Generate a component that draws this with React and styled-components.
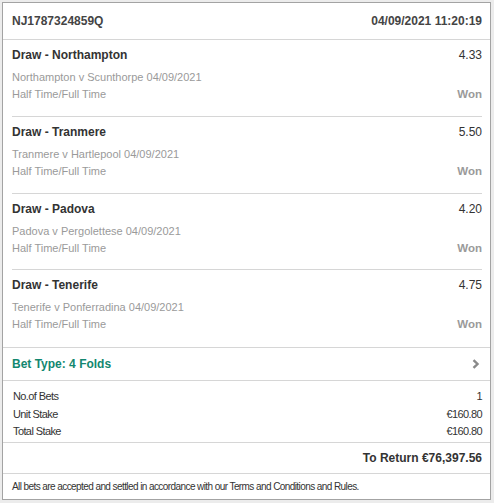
import styled, { createGlobalStyle } from "styled-components";

const GlobalStyle = createGlobalStyle`
  html, body {
    margin: 0;
    padding: 0;
    background: #ececec;
  }
  body {
    padding: 2px 0 0 2px;
    font-family: "Liberation Sans", Arial, sans-serif;
  }
`;

const selections = [
  { title: "Draw - Northampton", odds: "4.33", event: "Northampton v Scunthorpe 04/09/2021" },
  { title: "Draw - Tranmere", odds: "5.50", event: "Tranmere v Hartlepool 04/09/2021" },
  { title: "Draw - Padova", odds: "4.20", event: "Padova v Pergolettese 04/09/2021" },
  { title: "Draw - Tenerife", odds: "4.75", event: "Tenerife v Ponferradina 04/09/2021" },
];

const stakes = [
  { label: "No.of Bets", value: "1" },
  { label: "Unit Stake", value: "€160.80" },
  { label: "Total Stake", value: "€160.80" },
];

export default function App() {
  return (
    <>
      <GlobalStyle />
      <Card>
        <Header>
          <span>NJ1787324859Q</span>
          <span>04/09/2021 11:20:19</span>
        </Header>
        {selections.map((s, i) => (
          <Selection key={s.title} last={i === selections.length - 1}>
            <TitleRow>
              <Title>{s.title}</Title>
              <Odds>{s.odds}</Odds>
            </TitleRow>
            <SubRow first>
              <span>{s.event}</span>
            </SubRow>
            <SubRow>
              <span>Half Time/Full Time</span>
              <Result>Won</Result>
            </SubRow>
          </Selection>
        ))}
        <BetType>
          <span>Bet Type: 4 Folds</span>
          <svg width="8" height="10" viewBox="0 0 8 10">
            <path d="M1.5 1.2 L5.5 5 L1.5 8.8" fill="none" stroke="#8a8a8a" strokeWidth="2.4" />
          </svg>
        </BetType>
        <Stakes>
          {stakes.map((r) => (
            <StakeRow key={r.label}>
              <span>{r.label}</span>
              <span>{r.value}</span>
            </StakeRow>
          ))}
        </Stakes>
        <Return>To Return €76,397.56</Return>
        <Footer>All bets are accepted and settled in accordance with our Terms and Conditions and Rules.</Footer>
      </Card>
    </>
  );
}

const Card = styled.div`
  width: 487px;
  height: 496px;
  background: #fff;
  border: 1px solid #a3a3a3;
  display: flex;
  flex-direction: column;
  color: #333;
  font-size: 12px;
`;

const Header = styled.div`
  height: 36px;
  flex-shrink: 0;
  padding: 0 8px 0 9px;
  display: flex;
  align-items: center;
  justify-content: space-between;
  font-weight: bold;
  color: #444;
  border-bottom: 1px solid #d6d6d6;
`;

const Selection = styled.div`
  flex-shrink: 0;
  margin: 0 8px 0 9px;
  padding: 6px 0 ${({ last }) => (last ? "13.75px" : "12.75px")};
  border-bottom: ${({ last }) => (last ? "none" : "1px solid #d6d6d6")};
`;

const TitleRow = styled.div`
  display: flex;
  justify-content: space-between;
  align-items: center;
  line-height: 18px;
`;

const Title = styled.span`
  font-weight: bold;
  color: #333;
`;

const Odds = styled.span`
  color: #333;
`;

const SubRow = styled.div`
  display: flex;
  justify-content: space-between;
  line-height: 17px;
  font-size: 11px;
  margin-top: ${({ first }) => (first ? "5px" : "0")};
  color: #9a9a9a;
`;

const Result = styled.span`
  font-weight: bold;
  font-size: 11.5px;
  color: #9a9a9a;
`;

const BetType = styled.div`
  height: 32px;
  flex-shrink: 0;
  padding: 0 10px 0 9px;
  display: flex;
  align-items: center;
  justify-content: space-between;
  border-top: 1px solid #d6d6d6;
  border-bottom: 1px solid #d6d6d6;
  font-weight: bold;
  color: #12876f;
`;

const Stakes = styled.div`
  flex-shrink: 0;
  padding: 7px 8px 1.5px 10px;
  border-bottom: 1px solid #d6d6d6;
`;

const StakeRow = styled.div`
  display: flex;
  justify-content: space-between;
  line-height: 17.5px;
  font-size: 11px;
  letter-spacing: -0.6px;
  color: #333;
`;

const Return = styled.div`
  height: 30px;
  flex-shrink: 0;
  padding: 0 8px 0 9px;
  display: flex;
  align-items: center;
  justify-content: flex-end;
  font-weight: bold;
  font-size: 12px;
  color: #333;
  border-bottom: 1px solid #d6d6d6;
`;

const Footer = styled.div`
  flex: 1;
  padding: 0 9px;
  display: flex;
  align-items: center;
  font-size: 10px;
  letter-spacing: -0.58px;
  color: #333;
`;
